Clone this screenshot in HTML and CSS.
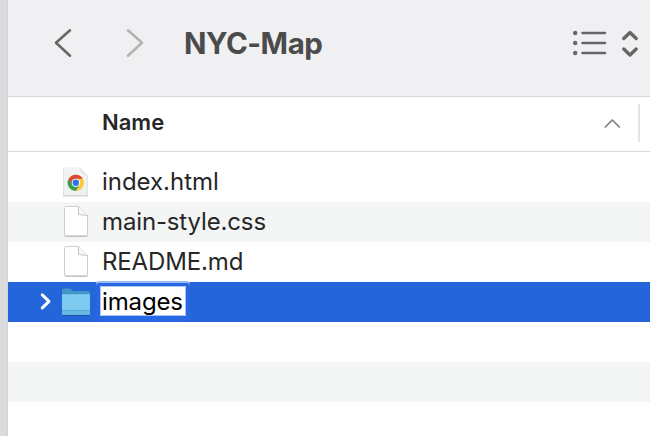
FILE: index.html
```html
<!DOCTYPE html>
<html lang="en">
<head>
<meta charset="utf-8">
<title>NYC-Map</title>
<link rel="stylesheet" href="styles.css">
</head>
<body>
<svg class="defs" width="0" height="0" aria-hidden="true">
  <defs>
    <linearGradient id="paper" x1="0" y1="0" x2="0" y2="1"><stop offset="0" stop-color="#f4f4f4"/><stop offset="1" stop-color="#efeff0"/></linearGradient>
    <linearGradient id="fold" x1="0" y1="1" x2="1" y2="0"><stop offset="0" stop-color="#fff"/><stop offset=".5" stop-color="#e0e0e0"/><stop offset="1" stop-color="#c8c8c8"/></linearGradient>
    <linearGradient id="folder" x1="0" y1="0" x2="0" y2="1"><stop offset="0" stop-color="#7fcdf1"/><stop offset="1" stop-color="#7ac9ec"/></linearGradient>
  </defs>
</svg>
<div class="window">
  <header class="toolbar">
    <svg class="back" width="18" height="32" viewBox="0 0 18 32"><path d="M16 3.3 2 15.8 16 28.7"/></svg>
    <svg class="forward" width="18" height="32" viewBox="0 0 18 32"><path d="M2 3.3 16 15.8 2 28.7"/></svg>
    <h1 class="title">NYC-Map</h1>
    <svg class="view" width="66" height="32" viewBox="0 0 66 32">
      <g class="dots"><circle cx="3.2" cy="6" r="2.2"/><circle cx="3.2" cy="16" r="2.2"/><circle cx="3.2" cy="26" r="2.2"/></g>
      <path class="lines" d="M10.5 6H33M10.5 16H33M10.5 26H33"/>
      <path class="arrows" d="M51.8 11.5 58 5.5 64.2 11.5M51.8 22 58 28 64.2 22"/>
    </svg>
  </header>
  <div class="columns">
    <span class="column-name">Name</span>
    <svg class="sort" width="16" height="10" viewBox="0 0 16 10"><path d="M1.3 9 8.3 2 15.3 9"/></svg>
    <span class="divider"></span>
  </div>
  <ul class="files">
    <li class="row">
      <span class="disclosure"></span>
      <svg class="icon" width="30" height="34" viewBox="0 0 30 34">
        <path class="page-shade" d="M2 3H18L27 11V31.5H2Z"/>
        <path d="M2.5 2H18.5L26.5 10.5V30.3H2.5Z" fill="url(#paper)"/>
        <path d="M18.5 2 26.5 10.5H18.5Z" fill="url(#fold)"/>
        <circle cx="14.8" cy="17.8" r="8.1" fill="#fbc934"/>
        <path d="M14.8 18 7.8 13.7A8.1 8.1 0 0 0 14.8 25.9L18.3 20Z" fill="#34a153"/>
        <path d="M14.8 18V13.8H21.8A8.1 8.1 0 0 0 7.8 13.7L11.3 20Z" fill="#df4637"/>
        <circle cx="14.8" cy="17.8" r="4.1" fill="#fff"/>
        <circle cx="14.8" cy="17.8" r="3.2" fill="#2a76e8"/>
      </svg>
      <span class="label html">index.html</span>
    </li>
    <li class="row">
      <span class="disclosure"></span>
      <svg class="icon" width="30" height="34" viewBox="0 0 30 34">
        <path class="sheet" d="M3.5 2.5Q3.5 1.5 4.5 1.5H17.5L26.5 10.5V30.5Q26.5 31 26 31H4.5Q3.5 31 3.5 30Z"/>
        <path class="sheet-fold" d="M17.5 1.5V9.2Q17.5 9.7 18 9.7L22.5 10 26.5 10.5"/>
        <path class="sheet-base" d="M4 31.2H26.2"/>
      </svg>
      <span class="label">main-style.css</span>
    </li>
    <li class="row">
      <span class="disclosure"></span>
      <svg class="icon" width="30" height="34" viewBox="0 0 30 34">
        <path class="sheet" d="M3.5 2.5Q3.5 1.5 4.5 1.5H17.5L26.5 10.5V30.5Q26.5 31 26 31H4.5Q3.5 31 3.5 30Z"/>
        <path class="sheet-fold" d="M17.5 1.5V9.2Q17.5 9.7 18 9.7L22.5 10 26.5 10.5"/>
        <path class="sheet-base" d="M4 31.2H26.2"/>
      </svg>
      <span class="label">README.md</span>
    </li>
    <li class="row selected">
      <svg class="disclosure" width="12" height="20" viewBox="0 0 12 20"><path d="M3.3 2.9 10 9.4 3.3 15.9"/></svg>
      <svg class="icon" width="30" height="34" viewBox="0 0 30 34">
        <path d="M1.5 29.5H28.5V31H1.5Z" fill="#1c53a6"/>
        <path d="M1 5Q1 3.5 2.5 3.5H8.5Q10 3.5 11.3 5T14 6H27Q29 6 29 8V28Q29 30 27 30H2.5Q1 30 1 28.5Z" fill="#4097c8"/>
        <path d="M1 9.3H29V28.5Q29 30 27.5 30H2.5Q1 30 1 28.5Z" fill="url(#folder)"/>
        <path d="M1 25.3H29V28.5Q29 30 27.5 30H2.5Q1 30 1 28.5Z" fill="#68b9e1"/>
        <path d="M1 25.5H29" stroke="#4ba3d2" stroke-width=".7"/>
      </svg>
      <span class="label editing">images</span>
    </li>
    <li class="row"></li>
    <li class="row"></li>
    <li class="row"></li>
  </ul>
</div>
</body>
</html>
```
FILE: styles.css
```css
* { box-sizing: border-box; }
body {
  margin: 0;
  height: 436px;
  overflow: hidden;
  background: #dcdcde;
  font-family: Inter, "Liberation Sans", sans-serif;
}
.defs { position: absolute; }
svg { display: block; flex: none; overflow: visible; }
.window {
  height: 436px;
  margin-left: 7px;
  border-left: 1px solid #d2d2d3;
  background: #fff;
  overflow: hidden;
}
.toolbar {
  display: flex;
  align-items: center;
  height: 97px;
  padding: 0 11px 10px 46px;
  border-bottom: 1px solid #d5d5d6;
  background: #f0f0f2;
}
.back, .forward { fill: none; stroke: #666668; stroke-width: 2.6; stroke-linecap: round; stroke-linejoin: round; }
.forward { margin-left: 54px; stroke: #b3b3b5; }
.title {
  margin: 0 auto 0 40px;
  color: #4b4b4c;
  font-size: 29.5px;
  font-weight: 650;
  letter-spacing: -0.45px;
  line-height: 36px;
}
.view { margin-right: 1px; }
.dots { fill: #666668; }
.lines, .arrows { fill: none; stroke: #666668; stroke-width: 2.6; stroke-linecap: round; stroke-linejoin: round; }
.arrows { stroke-width: 3.4; }
.columns {
  display: flex;
  align-items: center;
  height: 55px;
  padding: 0 10px 2px 94px;
  border-bottom: 1px solid #d9d9d9;
}
.column-name {
  margin: 0 auto 2px 0;
  color: #272727;
  font-size: 22px;
  font-weight: 600;
}
.sort { fill: none; stroke: #7f7f7f; stroke-width: 1.7; stroke-linecap: round; stroke-linejoin: round; }
.divider { width: 2px; height: 38px; margin-left: 18px; background: #e3e3e3; }
.files { margin: 0; padding: 10px 0 0; list-style: none; }
.row { display: flex; align-items: center; height: 40px; padding-left: 31px; }
.row:nth-child(even) { background: #f4f5f5; }
.disclosure { width: 12px; margin-right: 10px; }
.disclosure path { fill: none; stroke: #fff; stroke-width: 3; stroke-linecap: round; stroke-linejoin: round; }
.label {
  margin-left: 11px;
  color: #272727;
  font-size: 24px;
  letter-spacing: -0.14px;
  line-height: 30px;
  white-space: nowrap;
}
.html { letter-spacing: -0.03px; }
.row.selected { background: #2465d9; }
.row .editing {
  height: 30px;
  margin: 0 0 2px 9px;
  padding: 0 3px 0 2px;
  background: #fff;
  color: #000;
  line-height: 32px;
  outline: 1px solid #a9c5f5;
  outline-offset: -1px;
  border-radius: 1px;
  box-shadow: 0 1px 0 4px #2867e4, 0 -1px 0 4px #9bb9f3;
}
.page-shade { fill: #d2d2d2; }
.sheet { fill: #fff; stroke: #cecece; stroke-width: 1; }
.sheet-fold { fill: #f8f8f8; stroke: #c4c4c4; stroke-width: 1; }
.sheet-base { fill: none; stroke: #b8b8b8; stroke-width: 1; }
```
